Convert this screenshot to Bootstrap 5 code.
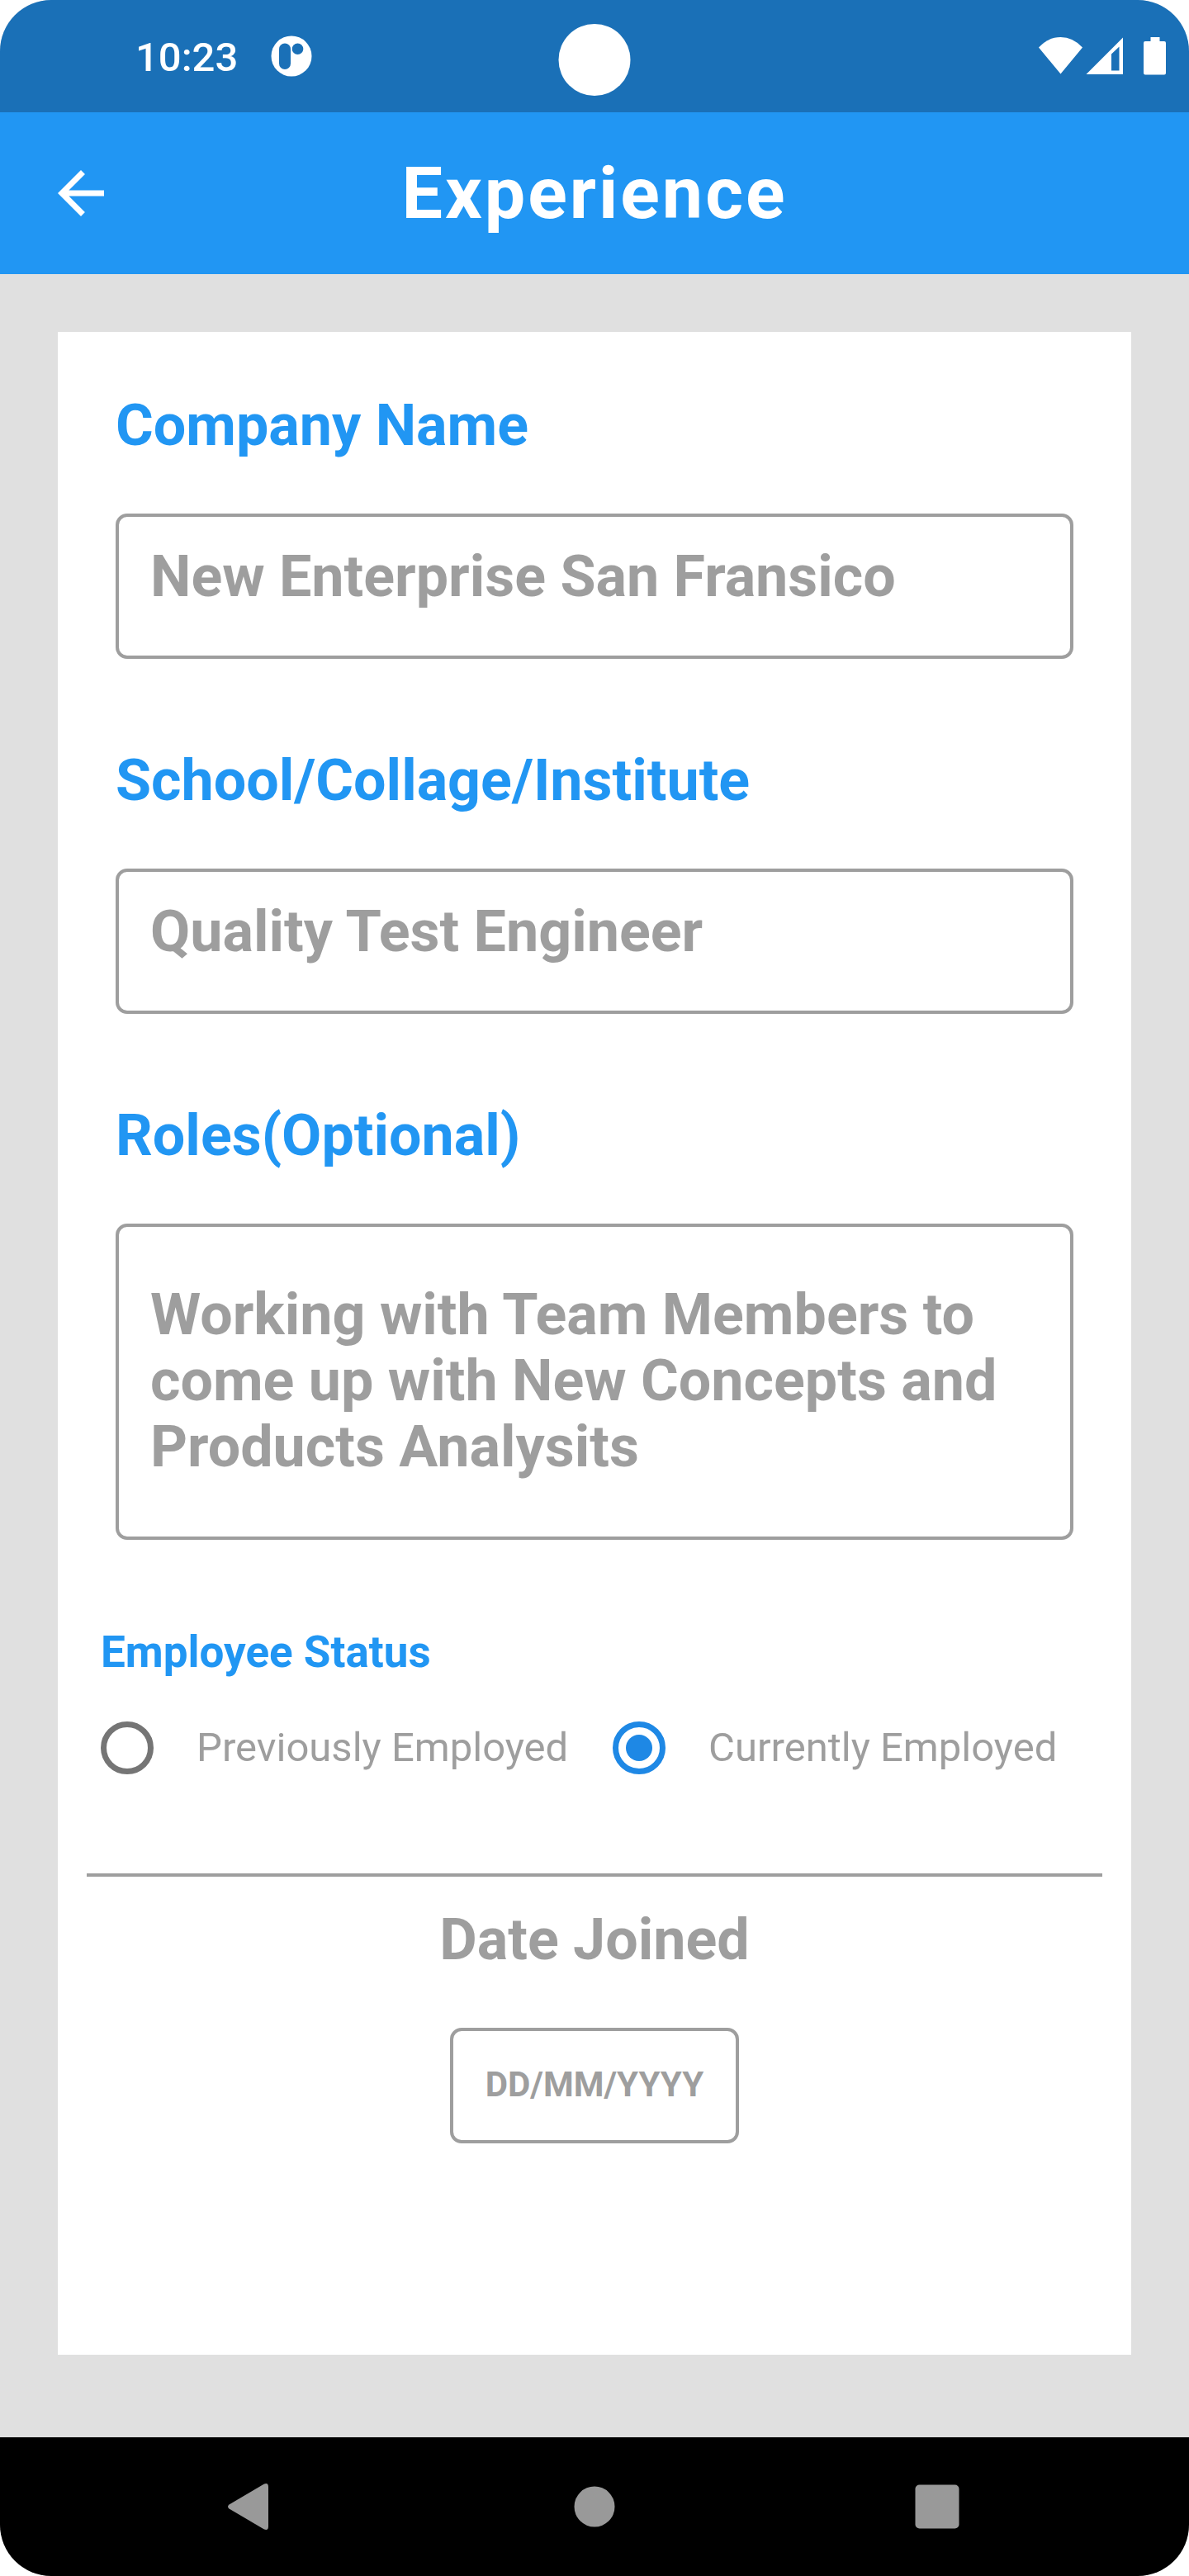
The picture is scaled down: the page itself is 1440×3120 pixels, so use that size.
<!DOCTYPE html>
<html lang="en">
<head>
<meta charset="utf-8">
<meta name="viewport" content="width=device-width, initial-scale=1">
<title>Experience</title>
<link href="https://cdn.jsdelivr.net/npm/bootstrap@5.3.0/dist/css/bootstrap.min.css" rel="stylesheet">
<style>
  :root { --blue: #2196f3; --grey: #9e9e9e; }
  body { font-family: Roboto, "Liberation Sans", sans-serif; background: #fff; }
  .phone { background: #e0e0e0; border-radius: 62px; overflow: hidden; }
  svg { display: block; flex: none; }

  .status-bar { background: #1a70b7; height: 136px; padding: 0 28px 0 164px; }
  .clock { font-size: 49px; line-height: 58px; font-weight: 500; padding-top: 4px; margin-right: 40px; }
  .camera { position: absolute; top: 29px; left: 50%; width: 87px; height: 87px; transform: translateX(-50%); background: #fff; border-radius: 50%; }

  .app-bar { background: var(--blue); height: 196px; padding: 0 56px; }
  .app-title { font-size: 88px; line-height: 104px; letter-spacing: 3px; }

  .sheet { background: #fff; margin: 70px 70px 100px; padding-top: 72px; }
  .fields { padding: 0 70px; }
  .field-label { font-size: 70px; line-height: 82px; font-weight: 700; color: var(--blue); margin-bottom: 66px; }
  .label-muted { color: var(--grey); }
  .entry { border: 4px solid var(--grey); border-radius: 14px; color: var(--grey); font-size: 70px; line-height: 82px; font-weight: 700; padding: 31px 38px 55px; margin-bottom: 106px; background: #fff; }
  .entry:focus { color: var(--grey); }
  .entry::placeholder { color: var(--grey); opacity: 1; }
  .entry-long { line-height: 80px; padding: 66px 38px; height: 383px; margin-bottom: 105px; resize: none; overflow: hidden; }
  .entry-date { width: 350px; height: 140px; font-size: 42px; line-height: 50px; padding: 39px 20px 43px; margin-bottom: 0; }

  .status-group { padding: 0 8px 0 52px; }
  .status-title { font-size: 53px; line-height: 62px; font-weight: 700; color: var(--blue); margin-bottom: 53px; }
  .choice { gap: 52px; }
  .choice label { font-size: 49px; line-height: 64px; color: var(--grey); white-space: nowrap; }
  .choice .form-check-input { width: 64px; height: 64px; margin: 0; flex: none; border: 7px solid #757575; padding: 9px; background-color: #fff; background-clip: content-box; }
  .choice .form-check-input:checked { border-color: #1e88e5; background-color: #1e88e5; background-image: none; }

  .rule { height: 4px; border: 0; background: var(--grey); opacity: 1; margin: 120px 35px 35px; }

  .nav-bar { background: #000; height: 168px; padding: 0 96px; }
</style>
</head>
<body>
<div class="phone d-flex flex-column min-vh-100">
  <div class="status-bar position-relative d-flex align-items-center text-white">
    <span class="clock">10:23</span>
    <svg width="50" height="50" viewBox="0 0 50 50" aria-hidden="true">
      <circle cx="25" cy="25" r="24.500" fill="#fff"/>
      <rect x="10" y="9.500" width="14" height="31.500" rx="7" fill="#1a70b7"/>
      <circle cx="32.500" cy="16.200" r="6.800" fill="#1a70b7"/>
    </svg>
    <div class="camera"></div>
    <svg class="ms-auto" width="154" height="46" viewBox="0 0 154 46" fill="#fff" aria-hidden="true">
      <path d="M0 12.500Q11.500 0 26.500 0T53 12.500L26.500 44.500Z"/>
      <path fill-rule="evenodd" d="M57.500 45L102 .5V45ZM88 20.500V40.500H97.500V11.500Z"/>
      <path d="M135.500 0h11v5h5.500q2 0 2 2v36.500q0 2-2 2h-23q-2 0-2-2V7q0-2 2-2h6.500Z"/>
    </svg>
  </div>

  <header class="app-bar d-flex align-items-center text-white">
    <button type="button" class="btn p-0 border-0 text-white" aria-label="Back">
      <svg width="84" height="84" viewBox="0 0 24 24" fill="currentColor"><path d="M20 11H7.830l5.590-5.590L12 4l-8 8 8 8 1.410-1.410L7.830 13H20z"/></svg>
    </button>
    <h1 class="app-title flex-grow-1 text-center fw-bold m-0">Experience</h1>
    <svg width="84" height="84" aria-hidden="true"></svg>
  </header>

  <main class="sheet flex-grow-1">
    <form>
      <div class="fields">
        <label class="field-label d-block" for="company">Company Name</label>
        <input class="entry form-control" id="company" type="text" value="New Enterprise San Fransico">
        <label class="field-label d-block" for="school">School/Collage/Institute</label>
        <input class="entry form-control" id="school" type="text" value="Quality Test Engineer">
        <label class="field-label d-block" for="roles">Roles(Optional)</label>
        <textarea class="entry entry-long form-control" id="roles" rows="3">Working with Team Members to come up with New Concepts and Products Analysits</textarea>
      </div>

      <fieldset class="status-group">
        <legend class="status-title">Employee Status</legend>
        <div class="row g-0">
          <div class="choice col-6 d-flex align-items-center">
            <input class="form-check-input" type="radio" name="status" id="previous">
            <label for="previous">Previously Employed</label>
          </div>
          <div class="choice col-6 d-flex align-items-center">
            <input class="form-check-input" type="radio" name="status" id="current" checked>
            <label for="current">Currently Employed</label>
          </div>
        </div>
      </fieldset>

      <hr class="rule">

      <div class="d-flex flex-column align-items-center">
        <label class="field-label label-muted" for="joined">Date Joined</label>
        <input class="entry entry-date form-control text-center" id="joined" type="text" placeholder="DD/MM/YYYY">
      </div>
    </form>
  </main>

  <nav class="nav-bar d-flex align-items-center" aria-label="System">
    <button type="button" class="btn flex-fill d-flex justify-content-center p-0 border-0" aria-label="Back">
      <svg width="84" height="84" viewBox="0 0 84 84" fill="#999"><path d="M15.500 39.500L57.500 14.800Q63 12.500 63 18V66Q63 71.500 57.500 69.200L15.500 44.500Q12.500 42 15.500 39.500Z"/></svg>
    </button>
    <button type="button" class="btn flex-fill d-flex justify-content-center p-0 border-0" aria-label="Home">
      <svg width="84" height="84" viewBox="0 0 84 84" fill="#999"><circle cx="42" cy="42" r="24.500"/></svg>
    </button>
    <button type="button" class="btn flex-fill d-flex justify-content-center p-0 border-0" aria-label="Recent apps">
      <svg width="84" height="84" viewBox="0 0 84 84" fill="#999"><rect x="14.500" y="15.500" width="53" height="53" rx="5"/></svg>
    </button>
  </nav>
</div>
<script src="https://cdn.jsdelivr.net/npm/bootstrap@5.3.0/dist/js/bootstrap.bundle.min.js"></script>
</body>
</html>
